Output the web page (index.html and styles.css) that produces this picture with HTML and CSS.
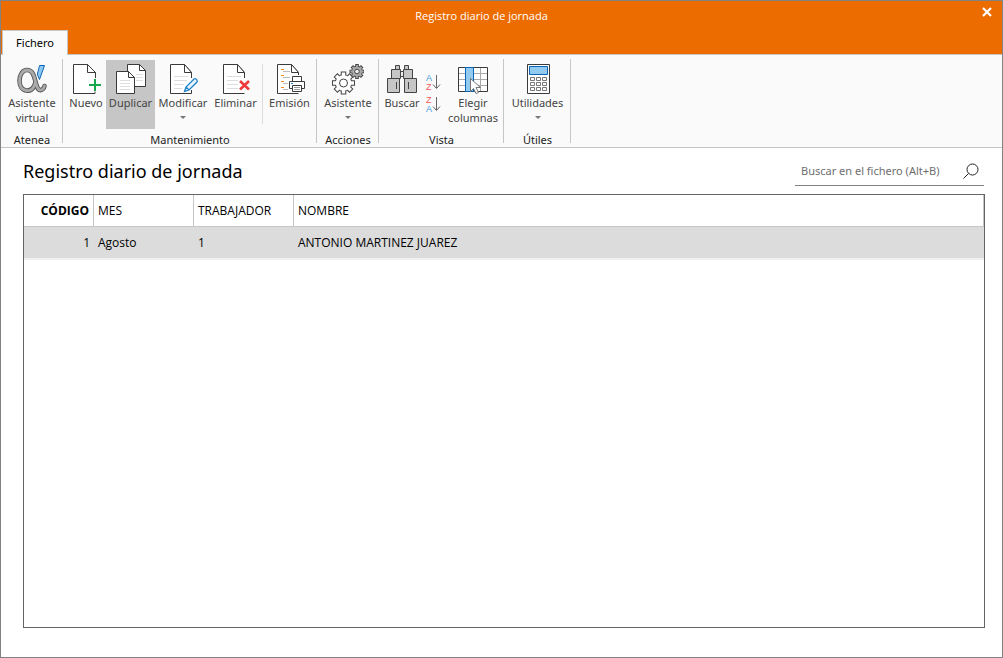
FILE: index.html
```html
<!DOCTYPE html>
<html lang="es">
<head>
<meta charset="utf-8">
<meta name="viewport" content="width=device-width, initial-scale=1">
<title>Registro diario de jornada</title>
<link rel="stylesheet" href="styles.css">
</head>
<body>
<div class="window">
  <header class="titlebar">
    <div class="caption">Registro diario de jornada</div>
    <button class="close" type="button" aria-label="Cerrar">
      <svg width="10" height="10" viewBox="0 0 10 10"><path d="M1 1l8 8M9 1l-8 8" stroke="#fff" stroke-width="2.2"/></svg>
    </button>
    <div class="tabs"><button class="tab" type="button">Fichero</button></div>
  </header>

  <nav class="ribbon" aria-label="Fichero">
    <section class="group">
      <div class="tools">
        <button class="tool w-l" type="button">
          <svg class="icon" viewBox="0 0 32 32" fill="none" stroke-linecap="round">
            <path d="M18 23.500c-2 3.500-5 4.500-7.500 4C6 27 3.500 23 3.500 17.500S6.500 7 11 7c7 0 7.500 9 9.500 15 1 3.500 2.500 5.500 4.500 5 2-.4 3-2 3.500-4M19.500 19c-.5 2-1 3.500-2 5" stroke="#555" stroke-width="4.600"/>
            <path d="M18 23.500c-2 3.500-5 4.500-7.500 4C6 27 3.500 23 3.500 17.500S6.500 7 11 7c7 0 7.500 9 9.500 15 1 3.500 2.500 5.500 4.500 5 2-.4 3-2 3.500-4M19.500 19c-.5 2-1 3.500-2 5" stroke="#aaa" stroke-width="2.800"/>
            <path d="M24 2.500h4.500l-5 14-2-5z" fill="#8cc8f0" stroke="#0a64b4"/>
          </svg>
          <span>Asistente virtual</span>
        </button>
      </div>
      <h2 class="group-name">Atenea</h2>
    </section>

    <section class="group">
      <div class="tools">
        <button class="tool w-xs" type="button">
          <svg class="icon" viewBox="0 0 32 32">
            <path d="M4 1.500h13.500l8 8V30.500H3.500V1.500z" fill="#fff"/>
            <path d="M25.500 15V9.500l-8-8h-14v29h21.500v-2" fill="none" stroke="#3a3a3a"/>
            <path d="M17.500 1.500v8h8z" fill="#fff" stroke="#3a3a3a"/>
            <path d="M25 16v12M19 22h12" stroke="#14a84b" stroke-width="2"/>
          </svg>
          <span>Nuevo</span>
        </button>
        <button class="tool w-m active" type="button">
          <svg class="icon" viewBox="0 0 32 32">
            <path d="M12.500 1.500h12l6 6v16h-18z" fill="#fff" stroke="#3a3a3a"/>
            <path d="M24.500 1.500v6h6z" fill="#fff" stroke="#3a3a3a"/>
            <path d="M21 11.500h7M21 14.500h7M21 17.500h7" stroke="#ddd"/>
            <path d="M1.500 8.500h12l6 6v16h-18z" fill="#fff" stroke="#3a3a3a"/>
            <path d="M13.500 8.500v6h6z" fill="#fff" stroke="#3a3a3a"/>
            <path d="M5 17.500h10M5 20.500h10M5 23.500h10M5 26.500h10" stroke="#ddd"/>
          </svg>
          <span>Duplicar</span>
        </button>
        <button class="tool w-l" type="button">
          <svg class="icon" viewBox="0 0 32 32">
            <path d="M3.500 1.500h14l7 8v21h-21z" fill="#fff"/>
            <path d="M24.500 15V9.500l-7-8h-14v29h21V27" fill="none" stroke="#3a3a3a"/>
            <path d="M17.500 1.500v8h7z" fill="#fff" stroke="#3a3a3a"/>
            <path d="M7 13.500h14M7 17.500h13M7 21.500h10M7 25.500h8" stroke="#ddd"/>
            <path d="M17.500 28.500l1.500-4.500 8-8c1.500-1 4 1 3 3l-8 8zM19 24l3 3" fill="#e8f4fc" stroke="#1e82c8" stroke-width="1.300"/>
          </svg>
          <span>Modificar</span><i class="arrow"></i>
        </button>
        <button class="tool w-m" type="button">
          <svg class="icon" viewBox="0 0 32 32">
            <path d="M3.500 1.500h14l7 8v21h-21z" fill="#fff"/>
            <path d="M24.500 15V9.500l-7-8h-14v29h21" fill="none" stroke="#3a3a3a"/>
            <path d="M17.500 1.500v8h7z" fill="#fff" stroke="#3a3a3a"/>
            <path d="M7 13.500h14M7 17.500h11M7 21.500h11M7 25.500h11" stroke="#ddd"/>
            <path d="M20 18l9 8.500M29 18l-9 8.500" stroke="#ee3a3a" stroke-width="2.600"/>
          </svg>
          <span>Eliminar</span>
        </button>
        <div class="divider"></div>
        <button class="tool w-m" type="button">
          <svg class="icon" viewBox="0 0 32 32">
            <path d="M3.500 1.500h14l7 8v21h-21z" fill="#fff"/>
            <path d="M24.500 12V9.500l-7-8h-14v29h21" fill="none" stroke="#3a3a3a"/>
            <path d="M17.500 1.500v8h7z" fill="#fff" stroke="#3a3a3a"/>
            <path d="M7 6.500h3M7 12.500h3M7 18.500h3M7 24.500h3" stroke="#f09020"/>
            <path d="M9 8.500h7M9 14.500h7M9 20.500h5M9 26.500h5" stroke="#bbb"/>
            <path d="M18.500 13.500h9v6h-9z" fill="#fff" stroke="#3a3a3a"/>
            <path d="M15.500 18.500h15v7h-15z" fill="#fff" stroke="#3a3a3a"/>
            <path d="M18.500 22.500h9v6h-9z" fill="#fff" stroke="#3a3a3a"/>
            <path d="M20 24.500h6M20 26.500h6" stroke="#999"/>
            <path d="M17 20.500h2" stroke="#1e82c8"/>
          </svg>
          <span>Emisión</span>
        </button>
      </div>
      <h2 class="group-name">Mantenimiento</h2>
    </section>

    <section class="group">
      <div class="tools">
        <button class="tool w-l" type="button">
          <svg class="icon" viewBox="0 0 32 32">
            <g transform="translate(11.500 20)">
              <path d="M0-11.500v23M-11.500 0h23M-8-8L8 8M8-8L-8 8" stroke="#444" stroke-width="5.500"/>
              <circle r="8.300" fill="#fff" stroke="#444"/>
              <path d="M0-10.500v21M-10.500 0h21M-7.300-7.300L7.300 7.300M7.300-7.300L-7.300 7.300" stroke="#fff" stroke-width="3.500"/>
              <circle r="4" fill="#fff" stroke="#444"/>
            </g>
            <g transform="translate(25 8.500)">
              <path d="M0-7.500v15M-7.500 0h15M-5.200-5.200L5.200 5.200M5.200-5.200L-5.200 5.200" stroke="#444" stroke-width="3.600"/>
              <circle r="5.300" fill="#aaa" stroke="#444"/>
              <path d="M0-6.500v13M-6.500 0h13M-4.500-4.500L4.500 4.500M4.500-4.500L-4.500 4.500" stroke="#aaa" stroke-width="1.800"/>
              <circle r="2.300" fill="#eee" stroke="#444"/>
            </g>
          </svg>
          <span>Asistente</span><i class="arrow"></i>
        </button>
      </div>
      <h2 class="group-name">Acciones</h2>
    </section>

    <section class="group">
      <div class="tools">
        <button class="tool w-xs" type="button">
          <svg class="icon" viewBox="0 0 32 32" fill="#c6c6c6" stroke="#444">
            <path d="M9.500 2.500h4v4h-4zM18.500 2.500h4v4h-4zM5.500 6.500h9v9h-9zM17.500 6.500h9v9h-9zM1.500 15.500h12v14h-12zM18.500 15.500h12v14h-12z"/>
            <path d="M14.500 8.500h3v5h-3z" fill="#eee"/><path d="M10.500 19v7M22.500 19v7"/>
          </svg>
          <span>Buscar</span>
        </button>
        <div class="sorts">
          <button class="sort" type="button" aria-label="Orden ascendente">
            <svg width="16" height="18" viewBox="0 0 16 18"><text class="a" x="1" y="8">A</text><text class="z" x="1" y="17">Z</text><path d="M11.500 2v13M8 11.500l3.500 4 3.500-4" fill="none" stroke="#666"/></svg>
          </button>
          <button class="sort" type="button" aria-label="Orden descendente">
            <svg width="16" height="18" viewBox="0 0 16 18"><text class="z" x="1" y="8">Z</text><text class="a" x="1" y="17">A</text><path d="M11.500 2v13M8 11.500l3.500 4 3.500-4" fill="none" stroke="#666"/></svg>
          </button>
        </div>
        <button class="tool w-l" type="button">
          <svg class="icon" viewBox="0 0 32 32">
            <path d="M1.500 4.500h29v24h-29z" fill="#fff"/>
            <path d="M8.500 5v23M23.500 5v23M2 10.500h28M2 16.500h28M2 22.500h28" stroke="#aaa"/>
            <path d="M1.500 4.500h29v24h-29z" fill="none" stroke="#3a3a3a"/>
            <path d="M8.500 4.500h8v24h-8z" fill="#92caf0" stroke="#0a64b4"/>
            <path d="M13.500 15.500v13l3-3 2.500 5 2.500-1-2.500-5h4.500z" fill="#fff" stroke="#777"/>
          </svg>
          <span>Elegir columnas</span>
        </button>
      </div>
      <h2 class="group-name">Vista</h2>
    </section>

    <section class="group">
      <div class="tools">
        <button class="tool w-xl" type="button">
          <svg class="icon" viewBox="0 0 32 32">
            <path d="M5.500 1.500h22v29h-22z" fill="#fff" stroke="#3a3a3a"/>
            <path d="M7.500 3.500h18v8h-18z" fill="#92caf0" stroke="#0a64b4"/>
            <path d="M8.500 14.500h4v3h-4zM14.500 14.500h4v3h-4zM20.500 14.500h4v3h-4zM8.500 19.500h4v3h-4zM14.500 19.500h4v3h-4zM20.500 19.500h4v3h-4zM8.500 24.500h4v3h-4zM14.500 24.500h4v3h-4zM20.500 24.500h4v3h-4z" fill="#fff" stroke="#777"/>
          </svg>
          <span>Utilidades</span><i class="arrow"></i>
        </button>
      </div>
      <h2 class="group-name">Útiles</h2>
    </section>
  </nav>

  <main class="content">
    <div class="heading">
      <h1>Registro diario de jornada</h1>
      <form class="search">
        <input type="text" aria-label="Buscar en el fichero" placeholder="Buscar en el fichero (Alt+B)">
        <button type="button" aria-label="Buscar"><svg width="16" height="16" viewBox="0 0 16 16" fill="none" stroke="#222"><circle cx="9.500" cy="6.500" r="5.500"/><path d="M5.500 10.500l-5 5"/></svg></button>
      </form>
    </div>
    <div class="grid">
      <table>
        <colgroup><col class="c-code"><col class="c-mid"><col class="c-mid"><col></colgroup>
        <thead><tr><th class="code">CÓDIGO</th><th>MES</th><th>TRABAJADOR</th><th>NOMBRE</th></tr></thead>
        <tbody><tr><td class="code">1</td><td>Agosto</td><td>1</td><td>ANTONIO MARTINEZ JUAREZ</td></tr></tbody>
      </table>
    </div>
  </main>
</div>
</body>
</html>
```
FILE: styles.css
```css
* { box-sizing: border-box; }
body {
  margin: 0;
  font: 12px/16px "Noto Sans", "Open Sans", sans-serif;
  color: #000;
}
button, input { font: inherit; color: inherit; border: 0; padding: 0; background: none; }
h1, h2 { margin: 0; font-weight: 400; }

.window {
  display: flex;
  flex-direction: column;
  min-height: 100vh;
  border: 1px solid #828282;
  background: #fff;
}

.titlebar {
  display: grid;
  grid-template-columns: 32px 1fr 72px;
  grid-template-rows: 29px 24px;
  background: #ed6c00;
  border-bottom: 1px solid #c6c6c6;
}
.caption { grid-column: 2; align-self: center; text-align: center; color: #fff; font-family: "Open Sans", sans-serif; font-size: 11px; }
.close { display: grid; place-items: center; justify-self: end; width: 30px; height: 22px; }
.tabs { grid-column: 1 / -1; padding-left: 1px; }
.tab {
  width: 66px;
  height: 25px;
  background: #fafafa;
  border: 1px solid #c6c6c6;
  border-bottom: 0;
  font-size: 11px;
}

.ribbon {
  display: flex;
  padding-top: 4px;
  background: #fafafa;
  border-bottom: 1px solid #c6c6c6;
  font-size: 11px;
}
.group {
  display: flex;
  flex-direction: column;
  padding: 0 3px;
  background: linear-gradient(#c6c6c6, #c6c6c6) right top / 1px calc(100% - 4px) no-repeat;
}
.tools { display: flex; height: 73px; }
.group-name { font-size: 11px; line-height: 15px; text-align: center; color: #222; }
.tool {
  display: flex;
  flex-direction: column;
  align-items: center;
  height: 69px;
  margin-top: 1px;
  padding-top: 3px;
  line-height: 15px;
  color: #444;
}
.tool.active { background: #c6c6c6; }
.w-xs { width: 40px; }
.w-m { width: 49px; }
.w-l { width: 56px; }
.w-xl { width: 61px; }
.icon { width: 32px; height: 32px; flex: none; }
.arrow { margin-top: 6px; border: 3px solid transparent; border-top-color: #777; border-bottom: 0; }
.divider { width: 1px; height: 60px; margin: 5px 2px; background: #dcdcdc; }
.sorts { display: flex; flex-direction: column; gap: 4px; padding: 14px 4px 0 3px; }
.sort { display: block; height: 18px; }
.sort svg { display: block; }
.sort text { font: 9px "Liberation Sans", sans-serif; }
.a { fill: #3a9ad8; }
.z { fill: #ee5a5a; }

.content { flex: 1; display: flex; flex-direction: column; padding: 8px 17px 29px 22px; }
.heading { display: flex; justify-content: space-between; align-items: flex-start; height: 38px; padding-right: 1px; }
.heading h1 { font-size: 18px; line-height: 30px; }
.search { display: flex; align-items: center; width: 189px; height: 30px; border-bottom: 1px solid #828282; }
.search input { flex: 1; min-width: 0; padding-left: 6px; font-size: 11px; outline: 0; }
.search input::placeholder { color: #6e6e6e; opacity: 1; }
.search button { width: 26px; height: 20px; display: grid; place-items: center; }

.grid { flex: 1; border: 1px solid #646464; }
table { width: 100%; border-collapse: separate; border-spacing: 0; table-layout: fixed; font-family: "Open Sans", sans-serif; }
.c-code { width: 70px; }
.c-mid { width: 100px; }
th, td { height: 32px; padding: 0 4px; text-align: left; font-weight: 400; white-space: nowrap; }
th { border-right: 1px solid #c6c6c6; border-bottom: 1px solid #c6c6c6; }
td { height: 33px; background: #dcdcdc; border-bottom: 2px solid #f0f0f0; }
.code { text-align: right; }
th.code { font-weight: 700; }
```
